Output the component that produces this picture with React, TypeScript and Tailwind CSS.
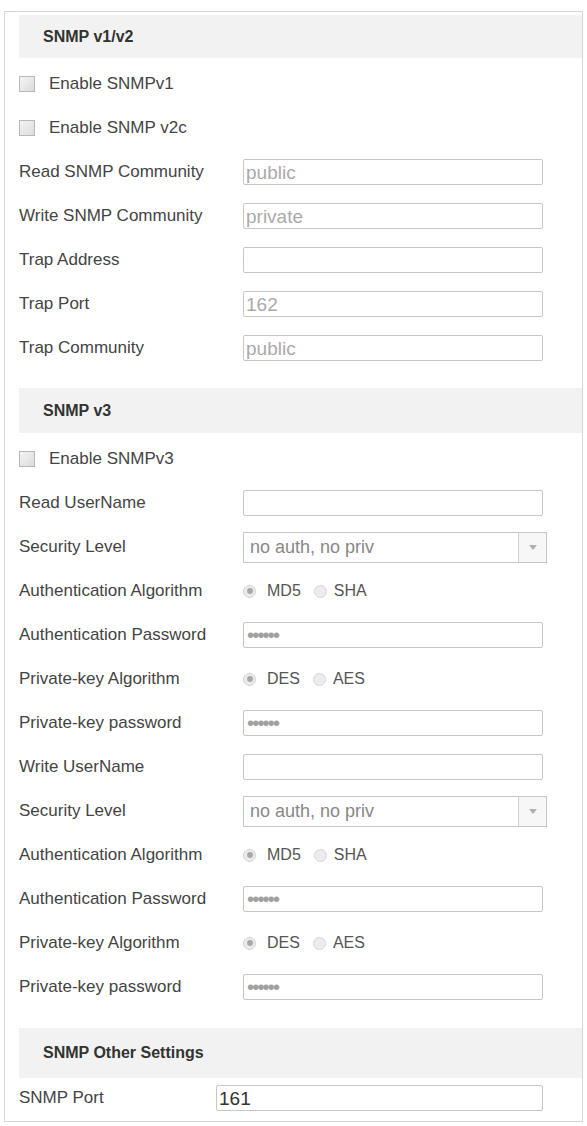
import React from "react";

type Row =
  | { kind: "check"; label: string }
  | { kind: "input"; label: string; value?: string; password?: boolean }
  | { kind: "select"; label: string; value: string }
  | { kind: "radio"; label: string; options: [string, string] };

const v12Rows: Row[] = [
  { kind: "check", label: "Enable SNMPv1" },
  { kind: "check", label: "Enable SNMP v2c" },
  { kind: "input", label: "Read SNMP Community", value: "public" },
  { kind: "input", label: "Write SNMP Community", value: "private" },
  { kind: "input", label: "Trap Address" },
  { kind: "input", label: "Trap Port", value: "162" },
  { kind: "input", label: "Trap Community", value: "public" },
];

const userBlock = (who: string): Row[] => [
  { kind: "input", label: `${who} UserName` },
  { kind: "select", label: "Security Level", value: "no auth, no priv" },
  { kind: "radio", label: "Authentication Algorithm", options: ["MD5", "SHA"] },
  { kind: "input", label: "Authentication Password", password: true },
  { kind: "radio", label: "Private-key Algorithm", options: ["DES", "AES"] },
  { kind: "input", label: "Private-key password", password: true },
];

const v3Rows: Row[] = [
  { kind: "check", label: "Enable SNMPv3" },
  ...userBlock("Read"),
  ...userBlock("Write"),
];

function SectionHeader({ title, className }: { title: string; className: string }) {
  return (
    <div className={`bg-[#f2f2f2] flex items-center pl-[24px] text-[16px] font-bold text-[#333] ${className}`}>
      {title}
    </div>
  );
}

function Radio({ checked }: { checked?: boolean }) {
  return (
    <span className="w-[13px] h-[13px] rounded-full border border-[#d4d4d4] bg-[#ececec] flex items-center justify-center">
      {checked && <span className="w-[6px] h-[6px] rounded-full bg-[#a8a8a8]" />}
    </span>
  );
}

function FormRow({ row }: { row: Row }) {
  if (row.kind === "check") {
    return (
      <div className="h-[44px] flex items-center">
        <span className="w-[16px] h-[16px] border border-[#b8b8b8] bg-gradient-to-br from-[#f4f4f4] to-[#dcdcdc] mr-[14px]" />
        <span className="text-[17px] text-[#444]">{row.label}</span>
      </div>
    );
  }
  return (
    <div className="h-[44px] flex items-center">
      <span className="w-[224px] shrink-0 text-[17px] text-[#444] whitespace-nowrap">{row.label}</span>
      {row.kind === "input" && (
        <div className="w-[300px] h-[26px] border border-[#c6c6c6] rounded-[2px] flex items-center pl-[2px] text-[19px] text-[#aaa] leading-none">
          {row.password ? (
            <span className="text-[20px] text-[#a0a0a0] tracking-[-1.8px] pl-[1px]">••••••</span>
          ) : (
            row.value
          )}
        </div>
      )}
      {row.kind === "select" && (
        <div className="w-[304px] h-[31px] border border-[#c6c6c6] flex items-stretch">
          <span className="flex-1 flex items-center pl-[6px] text-[18px] text-[#888]">{row.value}</span>
          <span className="w-[28px] border-l border-[#d0d0d0] bg-[#f7f7f7] flex items-center justify-center">
            <svg width="8" height="5" viewBox="0 0 8 5">
              <path d="M0 0 L8 0 L4 5 Z" fill="#b0b0b0" />
            </svg>
          </span>
        </div>
      )}
      {row.kind === "radio" && (
        <div className="flex items-center text-[16px] text-[#555]">
          <Radio checked />
          <span className="ml-[11px]">{row.options[0]}</span>
          <span className="ml-[13px]">
            <Radio />
          </span>
          <span className="ml-[7px]">{row.options[1]}</span>
        </div>
      )}
    </div>
  );
}

export default function App() {
  return (
    <div className="w-[587px] h-[1126px] bg-white pt-[11px] font-['Liberation_Sans',Arial,sans-serif]">
      <div className="ml-[4px] w-[579px] border border-[#d6d6d6] pl-[14px] pt-[3px] pb-[3px]">
        <SectionHeader title="SNMP v1/v2" className="h-[43px] mb-[4px]" />
        {v12Rows.map((r, i) => (
          <FormRow key={i} row={r} />
        ))}

        <SectionHeader title="SNMP v3" className="h-[45px] mt-[18px] mb-[4px]" />
        {v3Rows.map((r, i) => (
          <FormRow key={i} row={r} />
        ))}

        <SectionHeader title="SNMP Other Settings" className="h-[50px] mt-[19px]" />
        <div className="h-[40px] flex items-center">
          <span className="w-[197px] shrink-0 text-[17px] text-[#444]">SNMP Port</span>
          <div className="w-[327px] h-[26px] border border-[#c6c6c6] rounded-[2px] flex items-center pl-[2px] text-[19px] text-[#333] leading-none">
            161
          </div>
        </div>
      </div>
    </div>
  );
}
